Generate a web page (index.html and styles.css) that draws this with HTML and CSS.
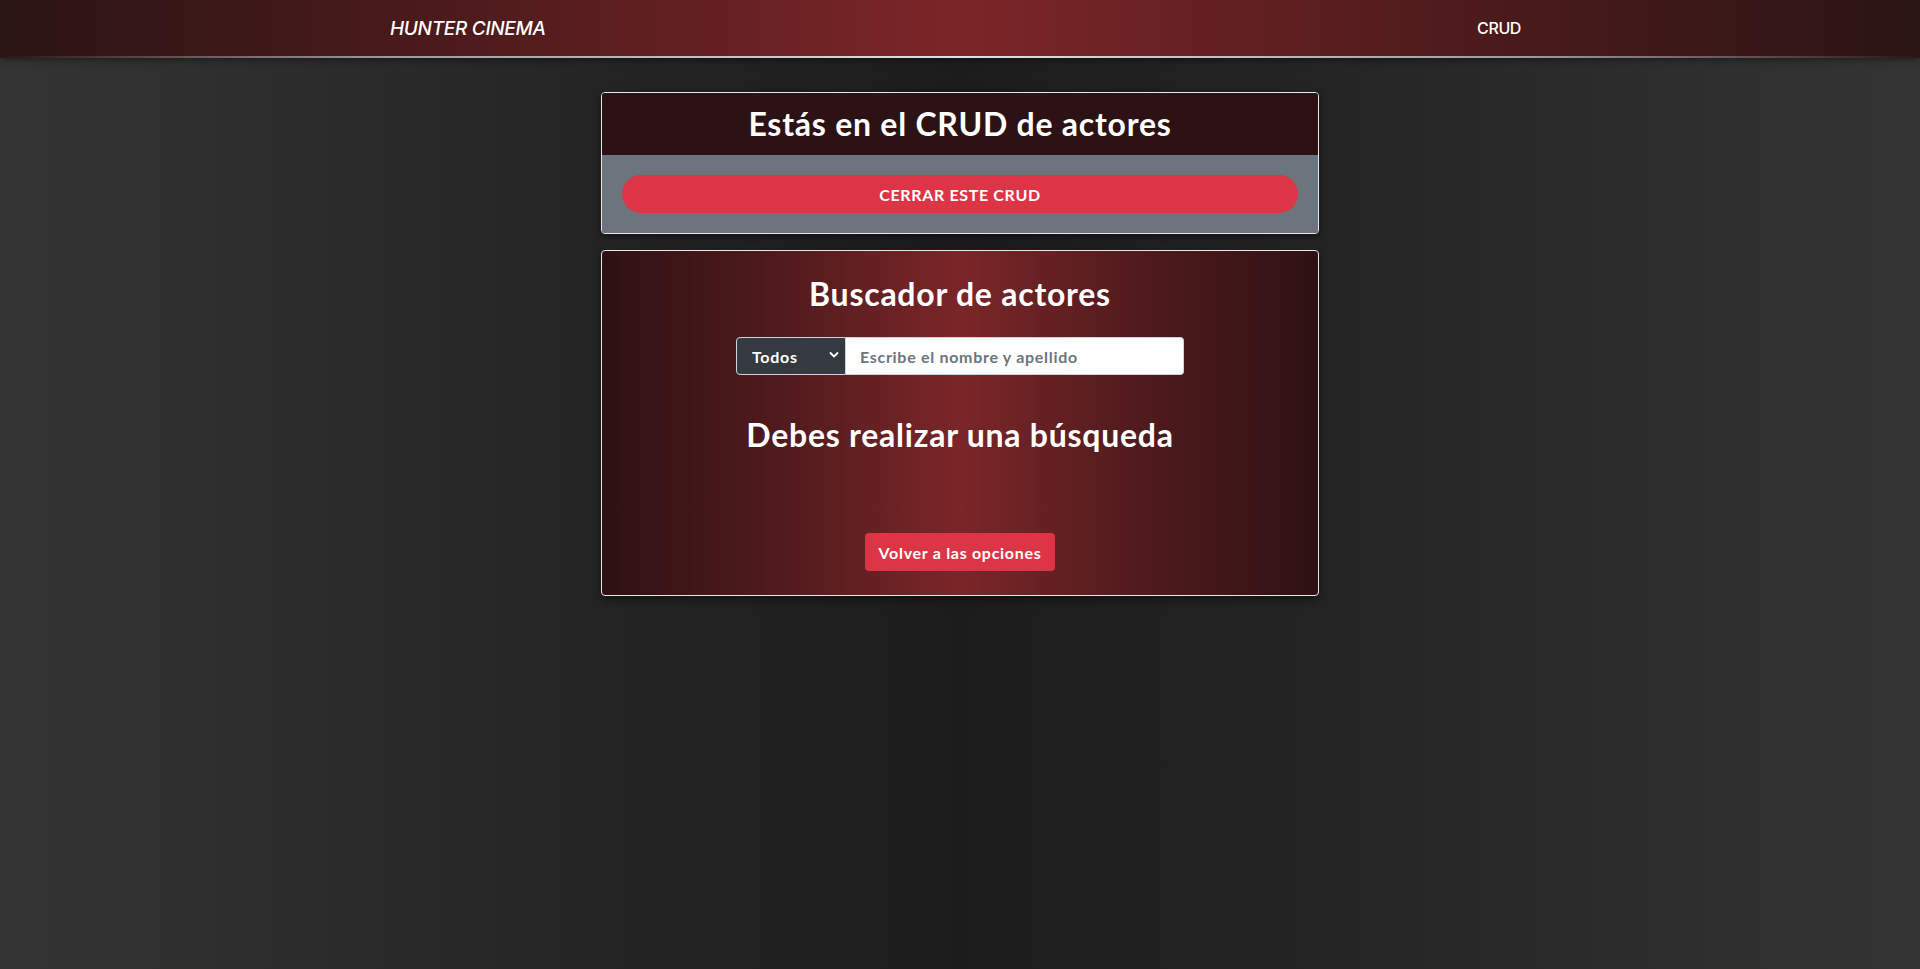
FILE: index.html
```html
<!DOCTYPE html>
<html lang="es">
<head>
<meta charset="utf-8">
<title>Hunter Cinema - CRUD de actores</title>
<link rel="stylesheet" href="styles.css">
</head>
<body>
<header class="topbar">
  <nav class="topbar-inner">
    <a class="brand" href="#">HUNTER CINEMA</a>
    <a class="nav-link" href="#">CRUD</a>
  </nav>
</header>
<main class="page">
  <section class="card card-crud">
    <div class="card-head">
      <h2 class="title">Estás en el CRUD de actores</h2>
    </div>
    <div class="card-gray">
      <button class="btn-pill">CERRAR ESTE CRUD</button>
    </div>
  </section>
  <section class="card card-search">
    <h2 class="title">Buscador de actores</h2>
    <div class="input-group">
      <div class="select-wrap">
        <select class="select">
          <option>Todos</option>
        </select>
        <svg class="chev" width="10" height="8" viewBox="0 0 10 8"><path d="M1.5 2 L5 5.5 L8.5 2" fill="none" stroke="#fff" stroke-width="1.8" stroke-linecap="round" stroke-linejoin="round"/></svg>
      </div>
      <input class="input" type="text" placeholder="Escribe el nombre y apellido">
    </div>
    <h2 class="title notice">Debes realizar una búsqueda</h2>
    <button class="btn-red">Volver a las opciones</button>
  </section>
</main>
</body>
</html>
```
FILE: styles.css
```css
* { box-sizing: border-box; }
html, body { margin: 0; padding: 0; }
body {
  min-height: 969px;
  font-family: Lato, "Liberation Sans", sans-serif;
  color: #fff;
  background: linear-gradient(to right, #343434 0%, #272727 25%, #1c1c1c 50%, #272727 75%, #343434 100%);
}
.topbar {
  height: 58px;
  background: linear-gradient(to right, #2a1414 0%, #4f1b1c 25%, #7c2629 50%, #4f1b1c 75%, #2a1414 100%);
  position: relative;
  box-shadow: 0 2px 6px rgba(0,0,0,0.4);
}
.topbar::after {
  content: "";
  position: absolute;
  left: 0; right: 0; bottom: 0;
  height: 2px;
  background: linear-gradient(to right, rgba(120,120,120,0) 0%, #9a9a9a 20%, #e0e0e0 50%, #9a9a9a 80%, rgba(120,120,120,0) 100%);
}
.topbar-inner {
  width: 1140px;
  height: 56px;
  margin: 0 auto;
  display: flex;
  align-items: center;
  justify-content: space-between;
}
.brand {
  font-family: Inter, "Open Sans", sans-serif;
  font-style: italic;
  font-weight: 500;
  font-size: 19px;
  letter-spacing: -0.3px;
  color: #fff;
  text-decoration: none;
}
.nav-link {
  font-family: Inter, "Open Sans", sans-serif;
  font-size: 16px;
  font-weight: 500;
  color: #fff;
  text-decoration: none;
  padding: 0 9px 0 8px;
  letter-spacing: -0.4px;
}
.page {
  width: 718px;
  margin: 34px auto 0;
  display: flex;
  flex-direction: column;
  gap: 16px;
}
.card {
  border: 1px solid #e8e8e8;
  border-radius: 4px;
  overflow: hidden;
  box-shadow: 0 3px 8px rgba(0,0,0,0.5);
}
.title {
  margin: 0;
  font-family: Lato, "Liberation Sans", sans-serif;
  font-weight: 700;
  font-size: 32px;
  line-height: 38px;
  letter-spacing: 0.75px;
  text-align: center;
  color: #fff;
}
.card-head {
  background: #2c1214;
  padding: 12px 20px;
}
.card-gray {
  background: #6c757d;
  padding: 20px;
}
.btn-pill {
  display: block;
  width: 100%;
  height: 38px;
  border: 0;
  border-radius: 19px;
  background: #dc3545;
  color: #fff;
  font-family: Lato, "Liberation Sans", sans-serif;
  font-weight: 700;
  font-size: 16px;
  letter-spacing: 0.65px;
}
.card-search {
  background: linear-gradient(to right, #2e1113 0%, #551c1e 28%, #7b2628 50%, #551c1e 72%, #2e1113 100%);
  padding: 24px 20px 24px;
  display: flex;
  flex-direction: column;
  align-items: center;
}
.input-group {
  margin-top: 24px;
  display: flex;
  width: 448px;
  height: 38px;
}
.select-wrap {
  position: relative;
  width: 110px;
  flex: none;
}
.select {
  appearance: none;
  -webkit-appearance: none;
  width: 100%;
  height: 38px;
  background: #343a40;
  color: #fff;
  border: 1px solid #ced4da;
  border-radius: 4px 0 0 4px;
  padding: 0 12px 0 15px;
  font-family: Lato, "Liberation Sans", sans-serif;
  font-weight: 700;
  font-size: 16px;
  letter-spacing: 0.7px;
}
.chev {
  position: absolute;
  right: 7px;
  top: 14px;
  pointer-events: none;
}
.input {
  flex: 1;
  height: 38px;
  border: 1px solid #ced4da;
  border-left: 0;
  border-radius: 0 4px 4px 0;
  padding: 0 12px 0 14px;
  font-family: Lato, "Liberation Sans", sans-serif;
  font-weight: 700;
  font-size: 16px;
  letter-spacing: 0.7px;
  background: #fff;
  color: #495057;
}
.input::placeholder { color: #6c757d; }
.notice { margin-top: 41px; }
.btn-red {
  margin-top: 79px;
  height: 38px;
  padding: 0 14px;
  border: 0;
  border-radius: 4px;
  background: #dc3545;
  color: #fff;
  font-family: Lato, "Liberation Sans", sans-serif;
  font-weight: 700;
  font-size: 16px;
  letter-spacing: 0.7px;
}
```
